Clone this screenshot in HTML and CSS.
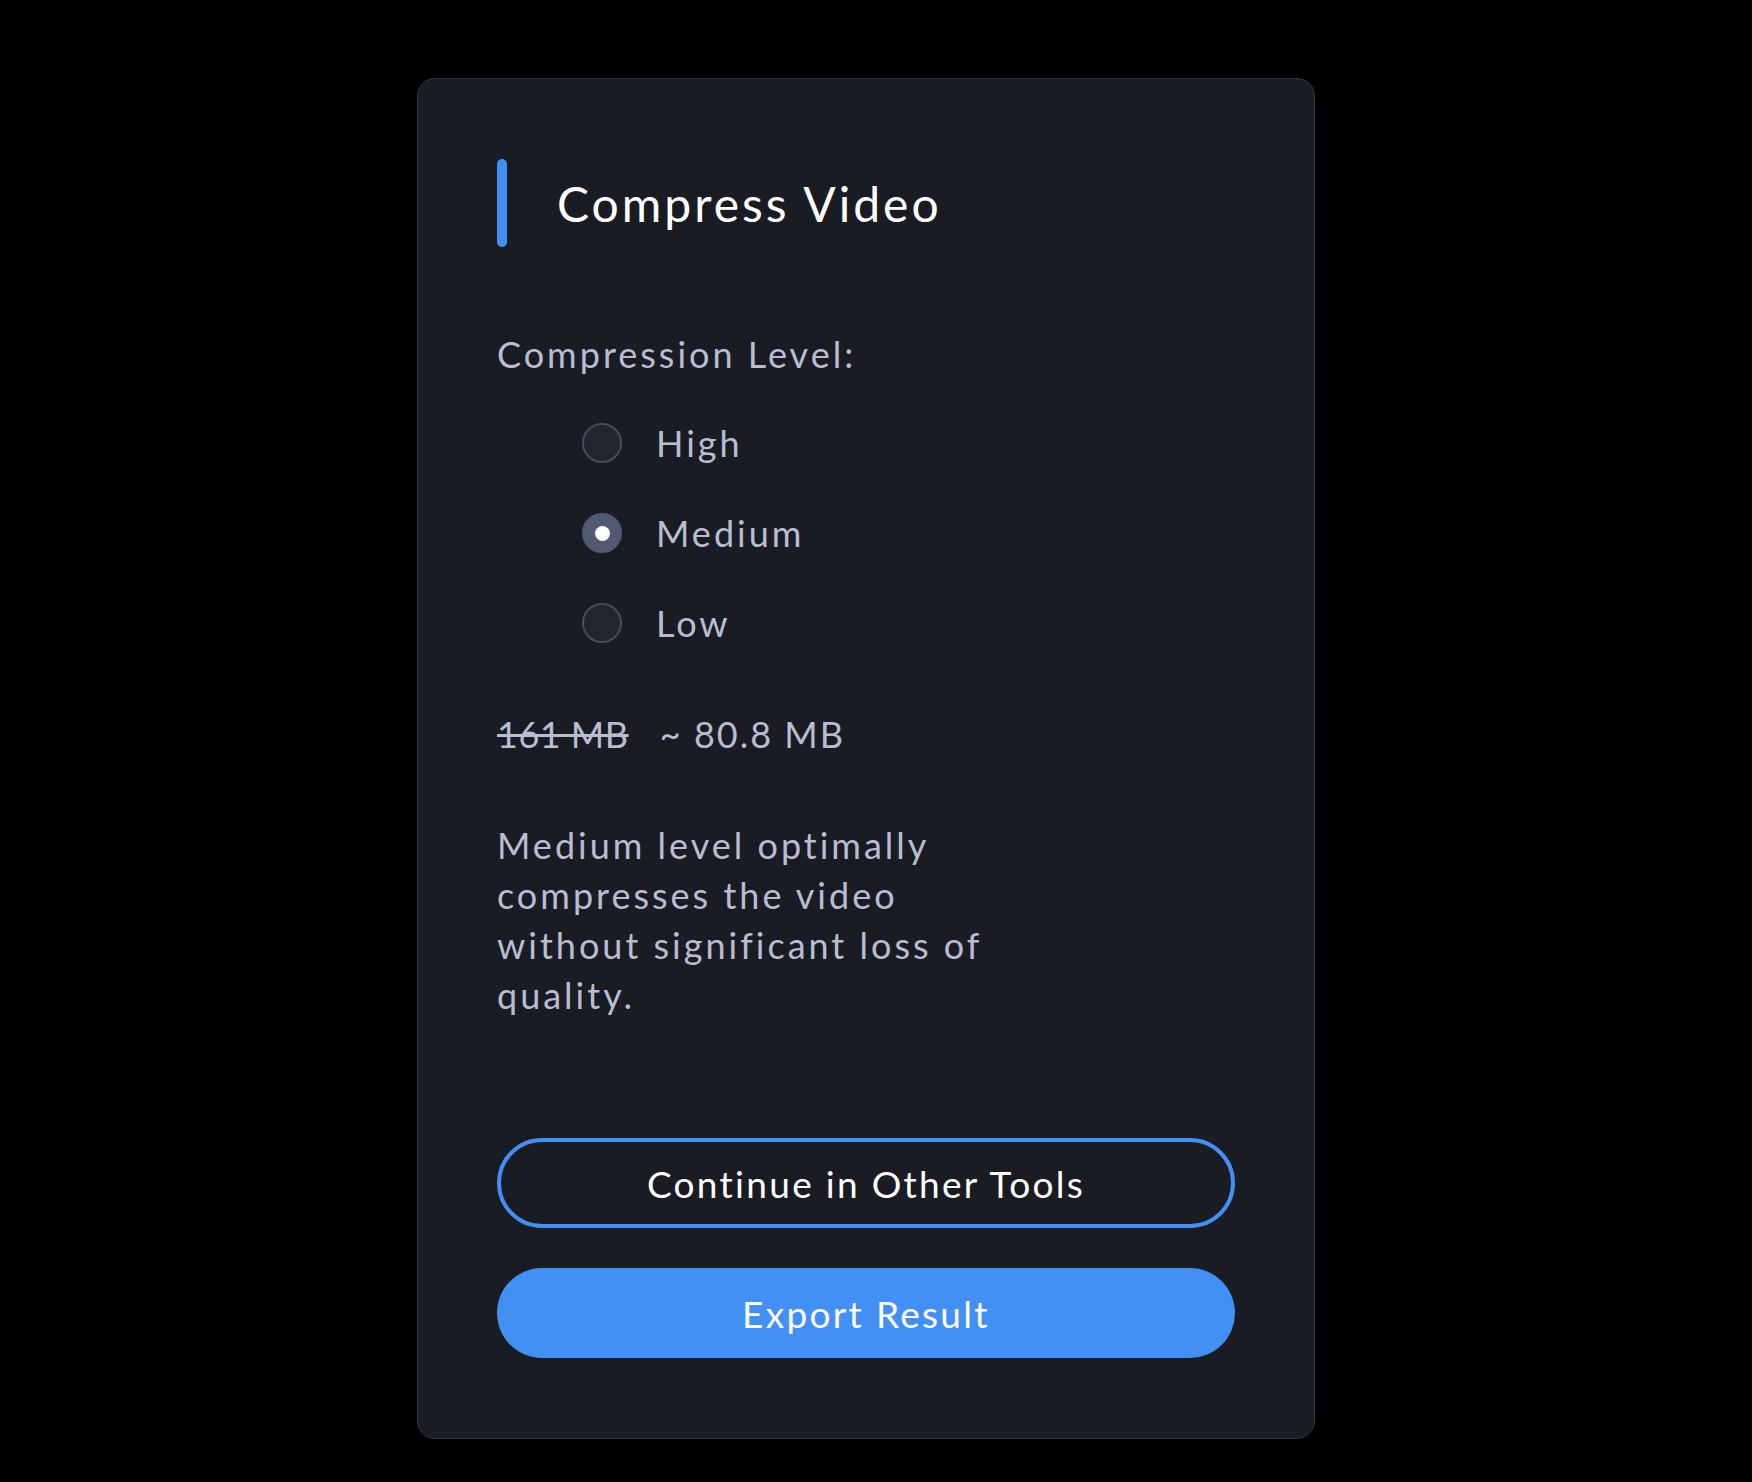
FILE: index.html
```html
<!DOCTYPE html>
<html lang="en">

<head>
    <meta charset="UTF-8">
    <meta name="viewport" content="width=device-width, initial-scale=1.0">
    <title>Compress Video</title>
    <link rel="stylesheet" href="styles.css">
</head>

<body>
    <div id="panel">
        <div class="panel-header">
            <span class="accent"></span>
            <h1>Compress Video</h1>
        </div>

        <div class="section-label">Compression Level:</div>

        <div class="levels">
            <label class="level">
                <input type="radio" name="level" value="high">
                <span class="dot"></span>
                High
            </label>
            <label class="level">
                <input type="radio" name="level" value="medium" checked>
                <span class="dot"></span>
                Medium
            </label>
            <label class="level">
                <input type="radio" name="level" value="low">
                <span class="dot"></span>
                Low
            </label>
        </div>

        <div class="sizes">
            <s class="old-size">161 MB</s>
            <span class="new-size">~ 80.8 MB</span>
        </div>

        <p class="hint">Medium level optimally compresses the video without significant loss of quality.</p>

        <div class="actions">
            <button class="btn btn-outline">Continue in Other Tools</button>
            <button class="btn btn-primary">Export Result</button>
        </div>
    </div>
</body>

</html>
```

FILE: styles.css
```css
body {
    margin: 0;
    background: #000;
    font-family: Lato, "Noto Sans", sans-serif;
    padding: 78px 0 0 417px;
}

#panel {
    width: 898px;
    box-sizing: border-box;
    padding: 80px 79px;
    background: #1a1c24;
    border: 1px solid #30333f;
    border-radius: 18px;
    color: #b9bdd3;
}

.panel-header {
    display: flex;
    align-items: center;
    height: 88px;
}

.accent {
    width: 10px;
    height: 88px;
    border-radius: 5px;
    background: #4390f5;
}

h1 {
    margin: 0 0 0 50px;
    font-size: 48px;
    font-weight: 400;
    color: #fff;
    letter-spacing: 3px;
}

.section-label {
    margin-top: 82px;
    font-size: 36px;
    line-height: 50px;
    letter-spacing: 3px;
}

.levels {
    margin-top: 19px;
    padding-left: 85px;
}

.level {
    display: flex;
    align-items: center;
    height: 90px;
    font-size: 36px;
    letter-spacing: 3px;
}

.level input {
    display: none;
}

.dot {
    width: 36px;
    height: 36px;
    margin-right: 34px;
    border: 2px solid #474b5c;
    border-radius: 50%;
    background: #22252f;
    display: flex;
    align-items: center;
    justify-content: center;
}

.level input:checked + .dot {
    background: #515872;
    border-color: #515872;
}

.level input:checked + .dot::after {
    content: "";
    width: 15px;
    height: 15px;
    border-radius: 50%;
    background: #fff;
}

.sizes {
    margin-top: 41px;
    font-size: 36px;
    line-height: 50px;
}

.old-size {
    margin-right: 22px;
    letter-spacing: 0.5px;
}

.new-size {
    letter-spacing: 2px;
}

.hint {
    width: 500px;
    margin: 61px 0 0 0;
    font-size: 36px;
    line-height: 50px;
    letter-spacing: 3px;
}

.actions {
    margin-top: 118px;
    display: flex;
    flex-direction: column;
    gap: 40px;
}

.btn {
    height: 90px;
    border-radius: 45px;
    font-family: inherit;
    font-size: 37px;
    letter-spacing: 2.3px;
    color: #fff;
    cursor: pointer;
}

.btn-outline {
    background: transparent;
    border: 4px solid #4390f5;
}

.btn-primary {
    background: #4390f5;
    border: none;
}
```
